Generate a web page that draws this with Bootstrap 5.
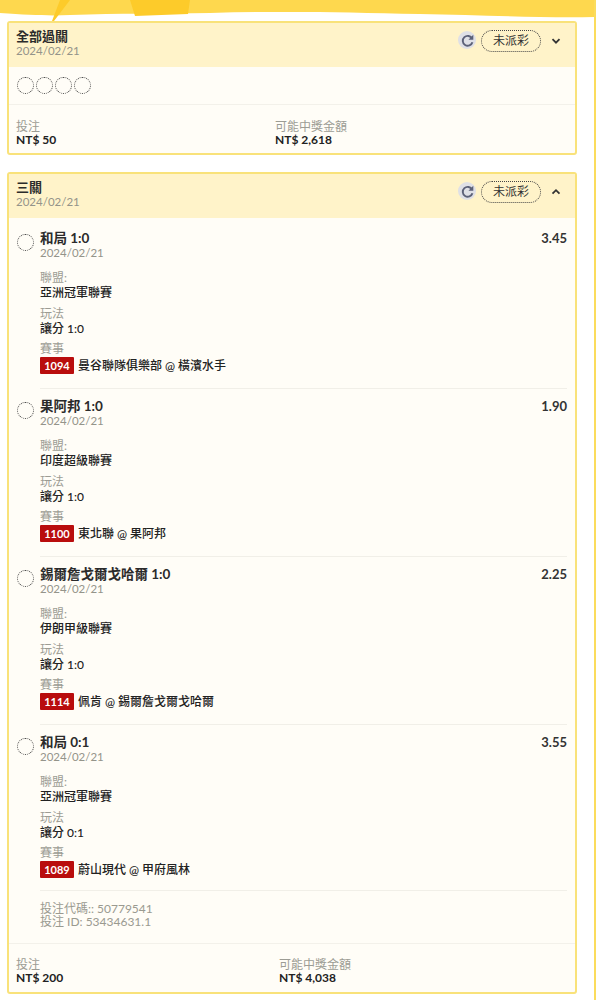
<!DOCTYPE html>
<html lang="zh-Hant">
<head>
  <meta charset="UTF-8" />
  <meta name="viewport" content="width=device-width, initial-scale=1.0"/>
  <title>投注紀錄</title>
  <link href="https://cdn.jsdelivr.net/npm/bootstrap@5.3.0/dist/css/bootstrap.min.css" rel="stylesheet"/>
  <style>
    body {
      background: #fff;
      font-family: Lato, "Noto Sans CJK TC", sans-serif;
      color: #222;
      font-size: 12px;
      line-height: 14px;
      width: 607px;
      height: 1000px;
      overflow: hidden;
    }
    .page-frame {
      width: 596px;
      height: 1000px;
      overflow: hidden;
      border-right: 2px solid #fbdc5c;
    }
    .brush-top { display: block; width: 594px; height: 21px; }
    .bet-card {
      width: 570px;
      margin-left: 7px;
      background: #fffdf7;
      border: 2px solid #f9e27a;
      border-radius: 3px;
    }
    .bet-card + .bet-card { margin-top: 17px; }
    .bet-head {
      background: #fff3c9;
      padding: 6px 7px 0;
      height: 44px;
    }
    .bet-title { font-size: 13px; font-weight: 700; line-height: 15px; color: #2b2b2b; }
    .bet-date { font-size: 11.5px; line-height: 14px; color: #94948a; }
    .head-actions { margin-top: 1px; margin-right: 4px; gap: 5px; }
    .refresh-icon {
      width: 18px;
      height: 18px;
      margin-top: 1px;
      border-radius: 50%;
      background: #dfe0e6;
    }
    .status-pill {
      height: 22px;
      width: 60px;
      border: 1px dotted #444;
      border-radius: 12px;
      font-size: 12px;
      line-height: 20px;
      text-align: center;
      color: #333;
    }
    .head-chevron { margin: 6px 3px 0 5px; }
    .circle-row { height: 38px; padding-left: 8px; border-bottom: 1px solid #f3f1ea; gap: 2px; }
    .pick-circle {
      width: 17px;
      height: 17px;
      flex: none;
      border: 1px dotted #444;
      border-radius: 50%;
    }
    .total-row { padding: 15px 7px 0; height: 48px; }
    .total-row.total-long { height: 49px; border-top: 1px solid #f3f1ea; padding-top: 14px; }
    .total-left { width: 259px; }
    .total-long .total-left { width: 263px; }
    .muted-label { color: #9c9c94; font-size: 12px; line-height: 14px; }
    .strong-value { font-weight: 700; font-size: 12px; line-height: 12px; color: #222; }
    .pick-list { padding: 12px 8px 0 8px; }
    .pick-item { height: 168px; }
    .pick-item.pick-last { height: 157px; }
    .pick-body { flex: 1; border-bottom: 1px solid #f1efe8; height: 159px; margin-left: 6px; }
    .pick-last .pick-body { height: 157px; }
    .pick-name { font-size: 13.5px; font-weight: 700; line-height: 16px; color: #2b2b2b; }
    .pick-odds { font-size: 13px; font-weight: 700; line-height: 16px; color: #333; }
    .pick-sub { color: #94948a; font-size: 11.5px; line-height: 14px; }
    .info-block { height: 35.5px; }
    .info-first { margin-top: 11px; }
    .info-value { font-size: 12px; line-height: 15px; color: #222; font-weight: 500; }
    .game-no {
      display: inline-block;
      width: 34px;
      height: 17px;
      background: #b90d0d;
      color: #fff;
      font-size: 11px;
      font-weight: 700;
      line-height: 17px;
      text-align: center;
      border-radius: 1px;
      margin-right: 4px;
    }
    .game-line { display: flex; align-items: center; margin-top: 1px; }
    .bet-codes { padding: 11px 0 13px 23px; color: #9a9a90; font-size: 12px; line-height: 13px; height: 52px; }
  </style>
</head>
<body>
  <div class="page-frame">
    <!-- brush strip along the top -->
    <svg class="brush-top" viewBox="0 0 594 21" preserveAspectRatio="none">
      <path d="M0 0H594V17C540 18 480 15 420 14C340 12 280 11 210 13C160 14 120 13 70 15C50 16 30 15 0 13Z" fill="#fed84e"/>
      <path d="M130 0H190L188 14L135 16ZM60 0H70L54 21L52 21Z" fill="#fdcb2a"/>
    </svg>

    <div class="bet-card">
      <div class="bet-head d-flex justify-content-between">
        <div>
          <div class="bet-title">全部過關</div>
          <div class="bet-date">2024/02/21</div>
        </div>
        <div class="head-actions d-flex align-items-start">
          <div class="refresh-icon d-flex align-items-center justify-content-center">
            <svg width="15" height="15" viewBox="0 0 14 14"><path d="M11.3 5.2A4.6 4.6 0 1 0 11.6 8.6" fill="none" stroke="#5c6178" stroke-width="1.8"/><path d="M12.4 1.6V6.2H7.9Z" fill="#5c6178"/></svg>
          </div>
          <div class="status-pill">未派彩</div>
          <svg class="head-chevron" width="10" height="10" viewBox="0 0 10 10"><path d="M1.5 3.2L5 6.7L8.5 3.2" fill="none" stroke="#333" stroke-width="1.8"/></svg>
        </div>
      </div>
      <div class="circle-row d-flex align-items-center">
        <span class="pick-circle"></span><span class="pick-circle"></span><span class="pick-circle"></span><span class="pick-circle"></span>
      </div>
      <div class="total-row d-flex">
        <div class="total-left">
          <div class="muted-label">投注</div>
          <div class="strong-value">NT$ 50</div>
        </div>
        <div>
          <div class="muted-label">可能中獎金額</div>
          <div class="strong-value">NT$ 2,618</div>
        </div>
      </div>
    </div>

    <div class="bet-card">
      <div class="bet-head d-flex justify-content-between">
        <div>
          <div class="bet-title">三關</div>
          <div class="bet-date">2024/02/21</div>
        </div>
        <div class="head-actions d-flex align-items-start">
          <div class="refresh-icon d-flex align-items-center justify-content-center">
            <svg width="15" height="15" viewBox="0 0 14 14"><path d="M11.3 5.2A4.6 4.6 0 1 0 11.6 8.6" fill="none" stroke="#5c6178" stroke-width="1.8"/><path d="M12.4 1.6V6.2H7.9Z" fill="#5c6178"/></svg>
          </div>
          <div class="status-pill">未派彩</div>
          <svg class="head-chevron" width="10" height="10" viewBox="0 0 10 10"><path d="M1.5 6.7L5 3.2L8.5 6.7" fill="none" stroke="#333" stroke-width="1.8"/></svg>
        </div>
      </div>
      <div class="pick-list">
        <div class="pick-item d-flex">
          <span class="pick-circle mt-1"></span>
          <div class="pick-body">
            <div class="d-flex justify-content-between"><div class="pick-name">和局 1:0</div><div class="pick-odds">3.45</div></div>
            <div class="pick-sub">2024/02/21</div>
            <div class="info-block info-first"><div class="muted-label">聯盟:</div><div class="info-value">亞洲冠軍聯賽</div></div>
            <div class="info-block"><div class="muted-label">玩法</div><div class="info-value">讓分 1:0</div></div>
            <div class="info-block"><div class="muted-label">賽事</div><div class="info-value game-line"><span class="game-no">1094</span>曼谷聯隊俱樂部 @ 橫濱水手</div></div>
          </div>
        </div>
        <div class="pick-item d-flex">
          <span class="pick-circle mt-1"></span>
          <div class="pick-body">
            <div class="d-flex justify-content-between"><div class="pick-name">果阿邦 1:0</div><div class="pick-odds">1.90</div></div>
            <div class="pick-sub">2024/02/21</div>
            <div class="info-block info-first"><div class="muted-label">聯盟:</div><div class="info-value">印度超級聯賽</div></div>
            <div class="info-block"><div class="muted-label">玩法</div><div class="info-value">讓分 1:0</div></div>
            <div class="info-block"><div class="muted-label">賽事</div><div class="info-value game-line"><span class="game-no">1100</span>東北聯 @ 果阿邦</div></div>
          </div>
        </div>
        <div class="pick-item d-flex">
          <span class="pick-circle mt-1"></span>
          <div class="pick-body">
            <div class="d-flex justify-content-between"><div class="pick-name">錫爾詹戈爾戈哈爾 1:0</div><div class="pick-odds">2.25</div></div>
            <div class="pick-sub">2024/02/21</div>
            <div class="info-block info-first"><div class="muted-label">聯盟:</div><div class="info-value">伊朗甲級聯賽</div></div>
            <div class="info-block"><div class="muted-label">玩法</div><div class="info-value">讓分 1:0</div></div>
            <div class="info-block"><div class="muted-label">賽事</div><div class="info-value game-line"><span class="game-no">1114</span>佩肯 @ 錫爾詹戈爾戈哈爾</div></div>
          </div>
        </div>
        <div class="pick-item pick-last d-flex">
          <span class="pick-circle mt-1"></span>
          <div class="pick-body">
            <div class="d-flex justify-content-between"><div class="pick-name">和局 0:1</div><div class="pick-odds">3.55</div></div>
            <div class="pick-sub">2024/02/21</div>
            <div class="info-block info-first"><div class="muted-label">聯盟:</div><div class="info-value">亞洲冠軍聯賽</div></div>
            <div class="info-block"><div class="muted-label">玩法</div><div class="info-value">讓分 0:1</div></div>
            <div class="info-block"><div class="muted-label">賽事</div><div class="info-value game-line"><span class="game-no">1089</span>蔚山現代 @ 甲府風林</div></div>
          </div>
        </div>
        <div class="bet-codes">
          <div>投注代碼:: 50779541</div>
          <div>投注 ID: 53434631.1</div>
        </div>
      </div>
      <div class="total-row total-long d-flex">
        <div class="total-left">
          <div class="muted-label">投注</div>
          <div class="strong-value">NT$ 200</div>
        </div>
        <div>
          <div class="muted-label">可能中獎金額</div>
          <div class="strong-value">NT$ 4,038</div>
        </div>
      </div>
    </div>
  </div>
  <script src="https://cdn.jsdelivr.net/npm/bootstrap@5.3.0/dist/js/bootstrap.bundle.min.js"></script>
</body>
</html>
